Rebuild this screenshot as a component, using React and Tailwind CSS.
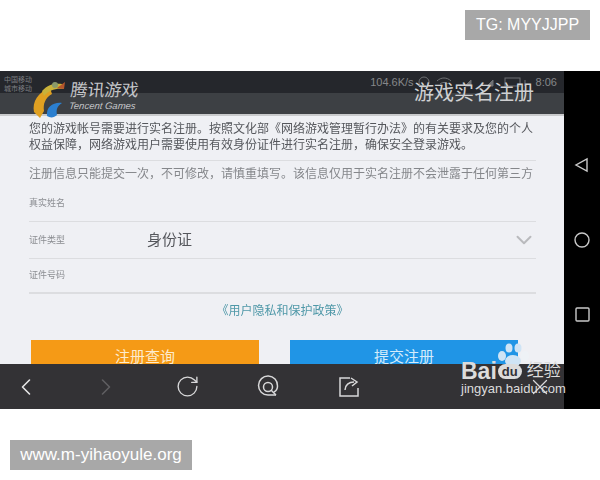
import React from 'react';
import { ChevronLeft, ChevronRight, ChevronDown, RotateCw, X } from 'lucide-react';

const cjk = "font-['Liberation_Sans','Noto_Sans_CJK_SC',sans-serif]";

const Logo = () => (
  <svg width="44" height="46" viewBox="0 0 44 46">
    <path d="M4 36 C2 26 8 16 20 12 L22 18 C15 22 13 28 14 35 L10 42 Z" fill="#e0a021" />
    <path d="M12 15 C18 8 26 7 32 8 L34 13 C26 12 19 14 14 20 Z" fill="#c9b23a" />
    <path d="M17 40 C16 31 23 26 32 27 C27 30 26 34 27 39 C24 42 20 42 17 40 Z" fill="#2b7fd0" />
    <path d="M27 12 L35 6 L34 13 Z" fill="#b5562c" />
    <circle cx="25" cy="9" r="3" fill="#8a9a6a" />
  </svg>
);

const StatusIcons = () => (
  <svg width="116" height="14" viewBox="0 0 116 14" fill="none" stroke="#6f7174" strokeWidth="1">
    <circle cx="7" cy="7" r="5" />
    <path d="M20 6 C24 2 30 2 34 6 M23 9 C25 7 29 7 31 9" />
    <path d="M48 11 L54 5 V11 Z M70 11 L76 5 V11 Z" fill="#6f7174" />
    <rect x="88" y="3" width="15" height="8" />
    <path d="M108 11 L108 5" />
  </svg>
);

const FormRow = ({ label, children, rowClass }) => (
  <div className={`flex items-center border-b border-[#dcdde0] ${rowClass}`}>
    <span className="w-[118px] text-[9px] leading-none text-[#8b8d92] blur-[0.3px]">{label}</span>
    {children}
  </div>
);

const ToolIcon = ({ children, className = 'w-[80px]' }) => (
  <div className={`flex shrink-0 justify-center ${className}`}>{children}</div>
);

export default function App() {
  return (
    <div className={`flex h-[480px] w-[600px] flex-col overflow-hidden bg-white ${cjk}`}>
      <div className="flex h-[40px] items-end justify-end pr-[10px]">
        <div className="flex h-[30px] w-[125px] items-center justify-center bg-[#a8a8a8] text-[16px] text-white">
          TG: MYYJJPP
        </div>
      </div>

      {/* phone screenshot */}
      <div className="mt-[31px] flex h-[338px]">
        <div className="relative flex w-[564px] flex-col bg-[#eff0f4]">
          {/* header */}
          <div className="relative h-[45px] shrink-0 border-b-2 border-[#c9cacc] bg-[#3d4044]">
            <div className="flex h-[22px] items-center justify-end bg-[#25272c] pr-[7px] text-[11px] text-[#85878a]">
              <span className="mr-[3px]">104.6K/s</span>
              <span className="mr-[3px] flex">
                <StatusIcons />
              </span>
              <span>8:06</span>
            </div>
            <div className="absolute left-[4px] top-[4px] w-[32px] text-[7px] leading-[9px] text-[#7d7f83]">
              中国移动<br />城市移动
            </div>
            <div className="absolute left-[30px] top-[5px]">
              <Logo />
            </div>
            <div className="absolute left-[70px] top-[10px] flex -skew-x-6 flex-col text-[#c4c5c8]">
              <span className="text-[17px] leading-[20px]">腾讯游戏</span>
              <span className="text-[9.5px] italic leading-[10px]">Tencent Games</span>
            </div>
            <div className="absolute right-[30px] top-[9px] text-[20px] leading-[26px] text-[#cfd0d2]">
              游戏实名注册
            </div>
          </div>

          {/* form */}
          <div className="flex-1 overflow-hidden pl-[29px] pr-[28px] pt-[5px]">
            <p className="whitespace-nowrap border-b border-[#dcdde0] pb-[7px] text-[12px] leading-[16px] text-[#55575c] blur-[0.3px]">
              您的游戏帐号需要进行实名注册。按照文化部《网络游戏管理暂行办法》的有关要求及您的个人
              <br />
              {'权益保障\uFF0C网络游戏用户需要使用有效身份证件进行实名注册\uFF0C确保安全登录游戏。'}
            </p>
            <p className="mt-[5px] whitespace-nowrap text-[12px] leading-[16px] text-[#85878b] blur-[0.3px]">
              {'注册信息只能提交一次\uFF0C不可修改\uFF0C请慎重填写。该信息仅用于实名注册不会泄露于任何第三方'}
            </p>
            <FormRow label="真实姓名" rowClass="mt-[8px] h-[32px] pb-[4px]" />
            <FormRow label="证件类型" rowClass="h-[37px]">
              <span className="text-[15px] text-[#55575c] blur-[0.3px]">身份证</span>
              <ChevronDown className="ml-auto mr-[-1px] h-[26px] w-[26px] text-[#b9babd]" strokeWidth={1.8} />
            </FormRow>
            <FormRow label="证件号码" rowClass="h-[35px] border-b-2" />
            <div className="mt-[9px] text-center text-[12px] leading-[16px] text-[#4f98a8] blur-[0.3px]">
              《用户隐私和保护政策》
            </div>
            <div className="mt-[21px] flex gap-[31px] pl-[2px]">
              <div className="flex h-[40px] w-[228px] items-start justify-center bg-[#f59a16] pt-[9px] text-[15px] leading-[15px] text-[#fdeccf]">
                注册查询
              </div>
              <div className="flex h-[40px] w-[228px] items-start justify-center bg-[#2095e6] pt-[9px] text-[15px] leading-[15px] text-[#d5ecfb]">
                提交注册
              </div>
            </div>
          </div>

          {/* toolbar */}
          <div className="relative flex h-[45px] shrink-0 items-center bg-[#333235]">
            <ToolIcon className="ml-[-14px] w-[80px]">
              <ChevronLeft className="h-[28px] w-[28px] text-[#e4e4e5]" strokeWidth={1.4} />
            </ToolIcon>
            <ToolIcon>
              <ChevronRight className="h-[28px] w-[28px] text-[#5f5e61]" strokeWidth={1.4} />
            </ToolIcon>
            <ToolIcon className="w-[82px]">
              <RotateCw className="h-[25px] w-[25px] text-[#d8d8d9]" strokeWidth={1.3} />
            </ToolIcon>
            <ToolIcon>
              <svg width="24" height="24" viewBox="0 0 24 24" fill="none" stroke="#d8d8d9" strokeWidth="1.5">
                <path d="M20 20 H12 A9.5 9.5 0 1 1 21.5 11 C21.5 14 20 16 18 17" />
                <circle cx="12" cy="12" r="4.5" />
                <path d="M15 15 L20 20" />
              </svg>
            </ToolIcon>
            <ToolIcon className="w-[82px]">
              <svg width="22" height="22" viewBox="0 0 22 22" fill="none" stroke="#d8d8d9" strokeWidth="1.5">
                <path d="M12 2 H2 V20 H20 V12" />
                <path d="M7 14 C7 9 11 6 16 6 M13 2 L19 6 L14 10" />
              </svg>
            </ToolIcon>
            <ToolIcon className="ml-[118px] w-[64px]">
              <X className="h-[26px] w-[26px] text-[#d8d8d9]" strokeWidth={1.2} />
            </ToolIcon>
          </div>

          {/* watermark */}
          <div className="absolute bottom-[13px] left-[461px] z-20 flex w-[108px] flex-col text-[#dcdcdc]">
            <div className="flex items-center font-bold">
              <span className="text-[23px] leading-[20px]">Bai</span>
              <span className="ml-[1px] rounded-full bg-[#dcdcdc] px-[4px] text-[13px] leading-[15px] text-[#333235]">du</span>
              <span className="ml-[5px] whitespace-nowrap text-[17px] font-normal leading-[20px]">经验</span>
            </div>
            <span className="mt-[1px] whitespace-nowrap text-[13px] leading-[14px]">jingyan.baidu.com</span>
          </div>
          <svg className="absolute left-[494px] top-[272px]" width="36" height="30" viewBox="0 0 36 30" fill="#cfe4f5">
            <ellipse cx="8" cy="13" rx="4" ry="5" />
            <ellipse cx="15" cy="5" rx="3.5" ry="4.5" />
            <ellipse cx="24" cy="5" rx="3.5" ry="4.5" />
            <ellipse cx="31" cy="13" rx="4" ry="5" fill="#eef2f6" />
            <ellipse cx="19" cy="18" rx="8" ry="6" />
          </svg>
        </div>

        {/* android nav */}
        <div className="flex w-[36px] flex-col items-center bg-black pt-[86px] text-[#c9c9c9]">
          <svg width="16" height="16" viewBox="0 0 16 16" fill="none" stroke="currentColor" strokeWidth="1.4">
            <path d="M13 2 V14 L2 8 Z" />
          </svg>
          <svg className="mt-[59px]" width="16" height="16" viewBox="0 0 16 16" fill="none" stroke="currentColor" strokeWidth="1.4">
            <circle cx="8" cy="8" r="7" />
          </svg>
          <svg className="mt-[59px]" width="15" height="15" viewBox="0 0 15 15" fill="none" stroke="currentColor" strokeWidth="1.4">
            <rect x="1" y="1" width="13" height="13" rx="1" />
          </svg>
        </div>
      </div>

      <div className="ml-[10px] mt-[31px] flex h-[30px] w-[182px] items-center justify-center bg-[#a8a8a8] text-[17px] text-white">
        www.m-yihaoyule.org
      </div>
    </div>
  );
}
